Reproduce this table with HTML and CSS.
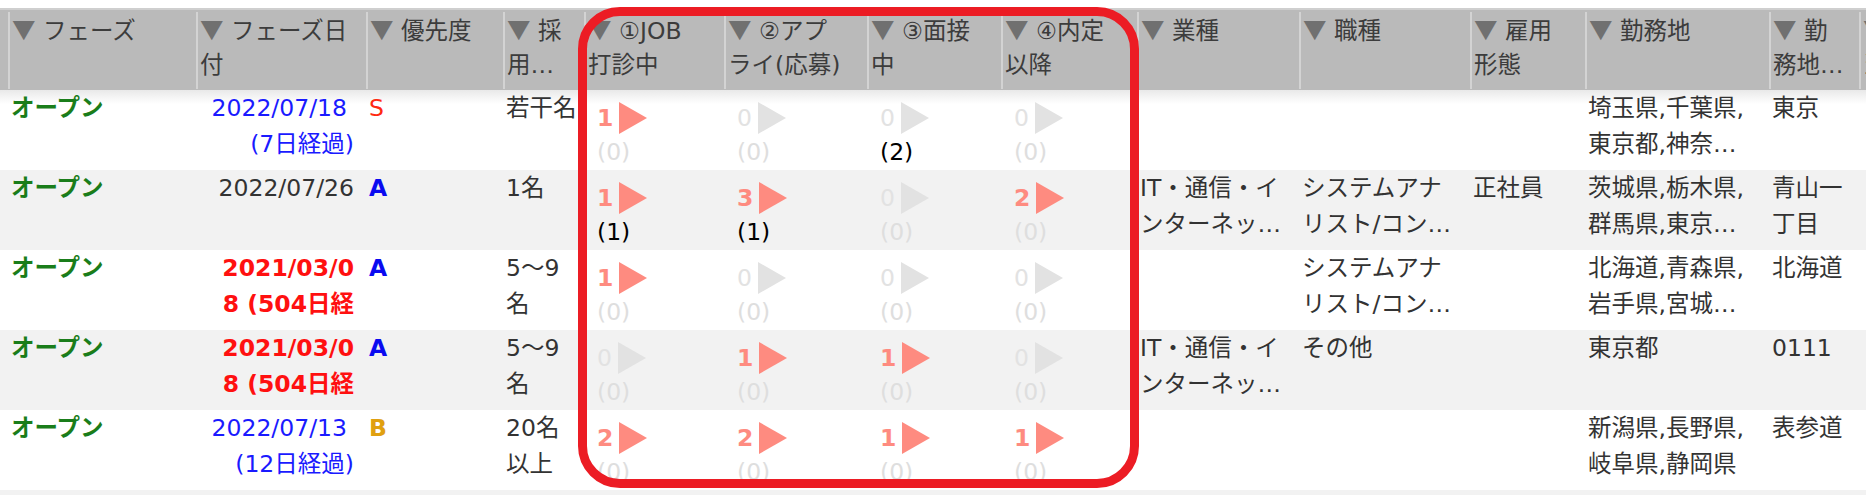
FILE: index.html
```html
<!DOCTYPE html>
<html lang="ja">
<head>
<meta charset="utf-8">
<title>案件一覧</title>
<link rel="stylesheet" href="styles.css">
</head>
<body>
<div class="page">
  <div class="thead cols">
    <div class="th first"></div>
    <div class="th"><span class="tri">▼</span> フェーズ</div>
    <div class="th"><span class="tri">▼</span> フェーズ日<br>付</div>
    <div class="th"><span class="tri">▼</span> 優先度</div>
    <div class="th"><span class="tri">▼</span> 採<br>用…</div>
    <div class="th"><span class="tri">▼</span> ①JOB<br>打診中</div>
    <div class="th"><span class="tri">▼</span> ②アプ<br>ライ(応募)</div>
    <div class="th"><span class="tri">▼</span> ③面接<br>中</div>
    <div class="th"><span class="tri">▼</span> ④内定<br>以降</div>
    <div class="th"><span class="tri">▼</span> 業種</div>
    <div class="th"><span class="tri">▼</span> 職種</div>
    <div class="th"><span class="tri">▼</span> 雇用<br>形態</div>
    <div class="th"><span class="tri">▼</span> 勤務地</div>
    <div class="th"><span class="tri">▼</span> 勤<br>務地…</div>
    <div class="th"><span class="tri">▼</span> 担<br>当…</div>
  </div>

  <div class="row cols top">
    <div class="td"></div>
    <div class="td open">オープン</div>
    <div class="td date blue"><span class="d1">2022/07/18</span><br>(7日経過)</div>
    <div class="td pri s">S</div>
    <div class="td">若干名</div>
    <div class="td pipe"><div class="pt on"><span class="n">1</span><svg class="arr" viewBox="0 0 28 32"><polygon points="0,0 28,16 0,32"/></svg></div><div class="ps">(0)</div></div>
    <div class="td pipe"><div class="pt off"><span class="n">0</span><svg class="arr" viewBox="0 0 28 32"><polygon points="0,0 28,16 0,32"/></svg></div><div class="ps">(0)</div></div>
    <div class="td pipe"><div class="pt off"><span class="n">0</span><svg class="arr" viewBox="0 0 28 32"><polygon points="0,0 28,16 0,32"/></svg></div><div class="ps dk">(2)</div></div>
    <div class="td pipe"><div class="pt off"><span class="n">0</span><svg class="arr" viewBox="0 0 28 32"><polygon points="0,0 28,16 0,32"/></svg></div><div class="ps">(0)</div></div>
    <div class="td"></div>
    <div class="td"></div>
    <div class="td"></div>
    <div class="td">埼玉県,千葉県,<br>東京都,神奈…</div>
    <div class="td">東京</div>
    <div class="td"></div>
  </div>

  <div class="row cols alt">
    <div class="td"></div>
    <div class="td open">オープン</div>
    <div class="td date">2022/07/26</div>
    <div class="td pri a">A</div>
    <div class="td">1名</div>
    <div class="td pipe"><div class="pt on"><span class="n">1</span><svg class="arr" viewBox="0 0 28 32"><polygon points="0,0 28,16 0,32"/></svg></div><div class="ps dk">(1)</div></div>
    <div class="td pipe"><div class="pt on"><span class="n">3</span><svg class="arr" viewBox="0 0 28 32"><polygon points="0,0 28,16 0,32"/></svg></div><div class="ps dk">(1)</div></div>
    <div class="td pipe"><div class="pt off"><span class="n">0</span><svg class="arr" viewBox="0 0 28 32"><polygon points="0,0 28,16 0,32"/></svg></div><div class="ps">(0)</div></div>
    <div class="td pipe"><div class="pt on"><span class="n">2</span><svg class="arr" viewBox="0 0 28 32"><polygon points="0,0 28,16 0,32"/></svg></div><div class="ps">(0)</div></div>
    <div class="td">IT・通信・イ<br>ンターネッ…</div>
    <div class="td">システムアナ<br>リスト/コン…</div>
    <div class="td">正社員</div>
    <div class="td">茨城県,栃木県,<br>群馬県,東京…</div>
    <div class="td">青山一<br>丁目</div>
    <div class="td"></div>
  </div>

  <div class="row cols">
    <div class="td"></div>
    <div class="td open">オープン</div>
    <div class="td date red">2021/03/0<br>8 (504日経</div>
    <div class="td pri a">A</div>
    <div class="td">5～9<br>名</div>
    <div class="td pipe"><div class="pt on"><span class="n">1</span><svg class="arr" viewBox="0 0 28 32"><polygon points="0,0 28,16 0,32"/></svg></div><div class="ps">(0)</div></div>
    <div class="td pipe"><div class="pt off"><span class="n">0</span><svg class="arr" viewBox="0 0 28 32"><polygon points="0,0 28,16 0,32"/></svg></div><div class="ps">(0)</div></div>
    <div class="td pipe"><div class="pt off"><span class="n">0</span><svg class="arr" viewBox="0 0 28 32"><polygon points="0,0 28,16 0,32"/></svg></div><div class="ps">(0)</div></div>
    <div class="td pipe"><div class="pt off"><span class="n">0</span><svg class="arr" viewBox="0 0 28 32"><polygon points="0,0 28,16 0,32"/></svg></div><div class="ps">(0)</div></div>
    <div class="td"></div>
    <div class="td">システムアナ<br>リスト/コン…</div>
    <div class="td"></div>
    <div class="td">北海道,青森県,<br>岩手県,宮城…</div>
    <div class="td">北海道</div>
    <div class="td"></div>
  </div>

  <div class="row cols alt">
    <div class="td"></div>
    <div class="td open">オープン</div>
    <div class="td date red">2021/03/0<br>8 (504日経</div>
    <div class="td pri a">A</div>
    <div class="td">5～9<br>名</div>
    <div class="td pipe"><div class="pt off"><span class="n">0</span><svg class="arr" viewBox="0 0 28 32"><polygon points="0,0 28,16 0,32"/></svg></div><div class="ps">(0)</div></div>
    <div class="td pipe"><div class="pt on"><span class="n">1</span><svg class="arr" viewBox="0 0 28 32"><polygon points="0,0 28,16 0,32"/></svg></div><div class="ps">(0)</div></div>
    <div class="td pipe"><div class="pt on"><span class="n">1</span><svg class="arr" viewBox="0 0 28 32"><polygon points="0,0 28,16 0,32"/></svg></div><div class="ps">(0)</div></div>
    <div class="td pipe"><div class="pt off"><span class="n">0</span><svg class="arr" viewBox="0 0 28 32"><polygon points="0,0 28,16 0,32"/></svg></div><div class="ps">(0)</div></div>
    <div class="td">IT・通信・イ<br>ンターネッ…</div>
    <div class="td">その他</div>
    <div class="td"></div>
    <div class="td">東京都</div>
    <div class="td">0111</div>
    <div class="td"></div>
  </div>

  <div class="row cols">
    <div class="td"></div>
    <div class="td open">オープン</div>
    <div class="td date blue"><span class="d1">2022/07/13</span><br>(12日経過)</div>
    <div class="td pri b">B</div>
    <div class="td">20名<br>以上</div>
    <div class="td pipe"><div class="pt on"><span class="n">2</span><svg class="arr" viewBox="0 0 28 32"><polygon points="0,0 28,16 0,32"/></svg></div><div class="ps">(0)</div></div>
    <div class="td pipe"><div class="pt on"><span class="n">2</span><svg class="arr" viewBox="0 0 28 32"><polygon points="0,0 28,16 0,32"/></svg></div><div class="ps">(0)</div></div>
    <div class="td pipe"><div class="pt on"><span class="n">1</span><svg class="arr" viewBox="0 0 28 32"><polygon points="0,0 28,16 0,32"/></svg></div><div class="ps">(0)</div></div>
    <div class="td pipe"><div class="pt on"><span class="n">1</span><svg class="arr" viewBox="0 0 28 32"><polygon points="0,0 28,16 0,32"/></svg></div><div class="ps">(0)</div></div>
    <div class="td"></div>
    <div class="td"></div>
    <div class="td"></div>
    <div class="td">新潟県,長野県,<br>岐阜県,静岡県</div>
    <div class="td">表参道</div>
    <div class="td"></div>
  </div>

  <div class="row cols alt"></div>

  <div class="mark"></div>
</div>
</body>
</html>
```

FILE: styles.css
```css
html, body {
  margin: 0;
  padding: 0;
}
body {
  width: 1866px;
  height: 495px;
  overflow: hidden;
  background: #fff;
  font-family: "DejaVu Sans", "Noto Sans CJK JP", sans-serif;
  font-size: 23.5px;
  color: #333;
}
.page {
  position: relative;
  padding-top: 8px;
}
.cols {
  display: grid;
  grid-template-columns: 8px 188px 170px 137px 81px 140px 143px 134px 136px 162px 171px 115px 184px 90px 120px;
  width: max-content;
}
.thead {
  background: #bababa;
  height: 82px;
  box-sizing: border-box;
  padding-top: 4px;
  border-top: 2px solid #cfcfcf;
}
.th {
  border-left: 2px solid #d3d3d3;
  padding-left: 2px;
  line-height: 34px;
  margin-bottom: 1px;
  color: #3c3c3c;
  white-space: nowrap;
  overflow: hidden;
  margin-top: -2px;
}
.th.first {
  border-left: none;
}
.tri {
  font-family: "Noto Sans CJK JP", sans-serif;
  color: #707070;
}
.row {
  height: 80px;
  background: #fff;
}
.row.alt {
  background: #f2f2f2;
}
.row.top {
  background: linear-gradient(#e9e9e9, #ffffff 14px);
}
.td {
  padding-left: 3px;
  line-height: 36px;
  white-space: nowrap;
  overflow: hidden;
}
.open {
  color: #1a7d1a;
  font-weight: bold;
}
.date {
  text-align: right;
  padding-right: 12px;
}
.date .d1 {
  margin-right: 7px;
}
.blue {
  color: #1a1aff;
}
.red {
  color: #ff1010;
  font-weight: bold;
}
.pri.s {
  color: #ff2a10;
}
.pri.a {
  color: #0a0af0;
  font-weight: bold;
}
.pri.b {
  color: #e0a010;
  font-weight: bold;
}
.pipe {
  padding: 12px 0 0 13px;
}
.pt {
  display: flex;
  align-items: center;
  height: 32px;
  gap: 6px;
}
.pt .n {
  line-height: 32px;
}
.pt.on {
  color: #fe8b80;
  font-weight: bold;
}
.pt.off {
  color: #e2e2e2;
}
.arr {
  width: 28px;
  height: 32px;
  fill: currentColor;
  display: block;
}
.ps {
  margin-top: 4px;
  line-height: 28px;
  color: #dedede;
}
.ps.dk {
  color: #000;
}
.mark {
  position: absolute;
  left: 578px;
  top: 7px;
  width: 561px;
  height: 481px;
  box-sizing: border-box;
  border: 9px solid #ec1c24;
  border-radius: 42px;
  pointer-events: none;
}
```
